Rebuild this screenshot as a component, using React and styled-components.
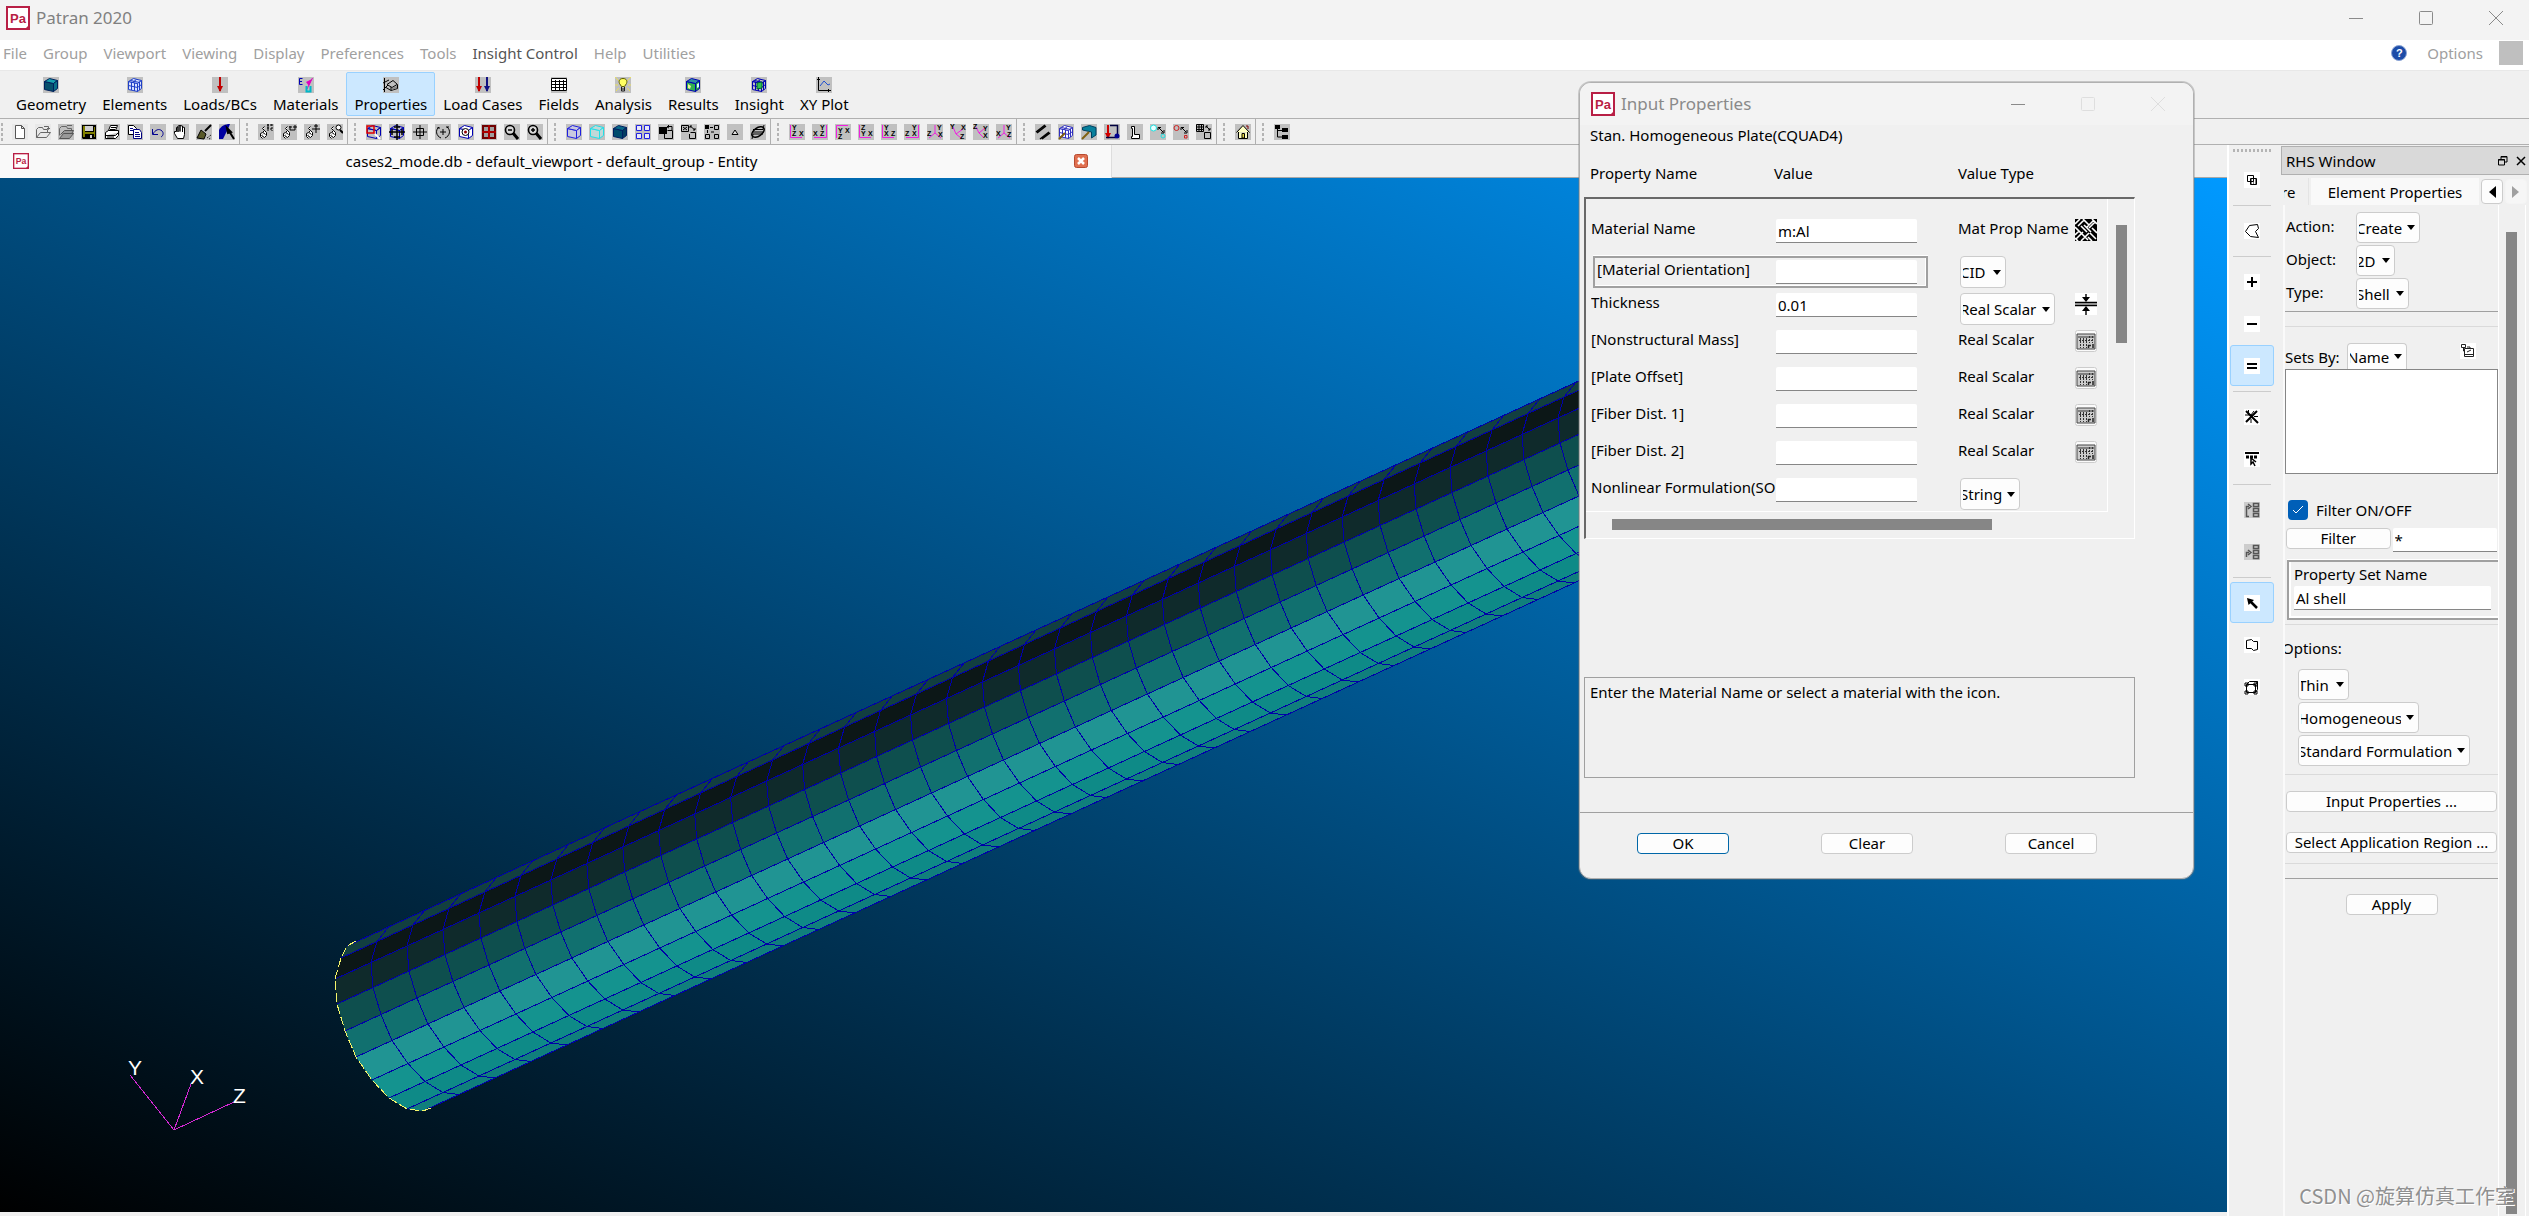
import { Fragment } from "react";
import styled, { createGlobalStyle, css } from "styled-components";

/* ---------- icons ---------- */

const BLUE = "#0000b4";
const GREY = "#c0c0c0";

const Cube = ({ fill = "none", top = fill, side = fill, stroke = BLUE, grid }) => (
  <g stroke={stroke} strokeWidth="1" strokeLinejoin="round">
    <path d="M1.5 4.5 10.5 6.5V14.5L1.5 12.5Z" fill={fill} />
    <path d="M1.5 4.5 6.5 1.5 14.5 3.5 10.5 6.5Z" fill={top} />
    <path d="M10.5 6.5 14.5 3.5V11.5L10.5 14.5Z" fill={side} />
    {grid && (
      <path d="M4.5 5V13M7.5 6V14M1.5 8.5 10.5 10.5 14.5 7.5M3.5 3.5 12.5 5.5M9.5 2.5 5.5 5.5M12.5 5V13" fill="none" />
    )}
  </g>
);

const Letter = ({ x, y, children }) => (
  <text x={x} y={y} fontSize="7" fontWeight="700" fontFamily='"Liberation Sans", sans-serif'>
    {children}
  </text>
);

// lines first, then [letter, x, y] for each axis
const axisIcon = (d, ...letters) => (
  <>
    <path d={d} stroke="#f020e0" fill="none" />
    {letters.map(([t, x, y]) => (
      <Letter key={t} x={x} y={y}>
        {t}
      </Letter>
    ))}
  </>
);

const hand = (
  <path
    d="M4.5 14.5 2.5 12.5V9.5L4.5 8.5 6.5 6.5 4.5 4.5 6.5 2.5M3.5 11.5 6.5 13.5 8.5 11.5 8.5 8.5 6.5 6.5M5 8.5 7.5 10.5"
    stroke="#000"
    fill="#fff"
  />
);

const arrowDown = (x, color) => (
  <>
    <path d={`M${x} 0V14`} stroke={color} strokeWidth="2" />
    <path d={`M${x - 3} 9H${x + 3}L${x} 15Z`} fill={color} />
  </>
);

const icons = {
  geometry: <Cube fill="#07506c" top="#18a0ae" side="#0a7088" stroke="#00205c" />,
  elements: <Cube fill="#d8e0ff" stroke="#2040c8" grid />,
  loads: arrowDown(8, "#c00000"),
  materials: (
    <>
      <path d="M4.5 1.5H1.5V7.5H4.5M1.5 4.5H4" stroke={BLUE} fill="none" />
      <path d="M8 5 14 2 11 9Z" fill="#e000c0" />
      <path d="M14.5 1 9 12" stroke="#e000c0" />
      <path d="M8.5 9V14.5H12.5V9" stroke="#00b8c8" fill="none" strokeWidth="2" />
    </>
  ),
  properties: (
    <>
      <path d="M1.5 1V15M0 6 6 3M0 13 5 8M3 10.5 8 13.5 14.5 11.5V7.5L10 3.5 4 7.5 9 10.5 14 7.5M8 13V10" stroke="#000" fill="none" />
      <path d="M9 11 14 9V11L9 13Z" fill="#888" />
    </>
  ),
  loadCases: (
    <>
      {arrowDown(4, "#c00000")}
      {arrowDown(12, "#101080")}
    </>
  ),
  fields: (
    <>
      <rect x="0" y="1" width="16" height="13" fill="#fff" />
      <path d="M.5 1.5H15.5V13.5H.5ZM.5 4.5H15.5M.5 7.5H15.5M.5 10.5H15.5M4.5 3V13M8.5 3V13M12.5 3V13" stroke="#000" fill="none" />
    </>
  ),
  analysis: (
    <>
      <path d="M0 0 4 4M16 0 12 4M0 8H3M13 8H16M1 14 4 11M15 14 12 11" stroke="#e8e060" />
      <path d="M8 1.5C4.5 1.5 3.5 4 4.5 6.5L6.5 9.5H9.5L11.5 6.5C12.5 4 11.5 1.5 8 1.5Z" fill="#ffff60" stroke="#606000" />
      <path d="M6.5 10V14H9.5V10M6.5 12H9.5" stroke="#222" fill="none" />
    </>
  ),
  results: (
    <>
      <Cube fill="#30b050" top="#3090a0" side="#20a040" />
      <path d="M3 7 6 9 5 12 3 11Z" fill="#f0f0a0" />
      <path d="M12 7 14 6V10L12 11Z" fill="#d0ffff" />
    </>
  ),
  insight: (
    <>
      <Cube grid />
      <path d="M6 6 11 5V11L6 12Z" fill="#30c050" stroke="#006030" />
    </>
  ),
  xyPlot: (
    <>
      <path d="M2.5 0V13.5H15M1 2.5H4M12.5 12V15" stroke="#000" fill="none" />
      <path d="M4 9 8 4 12 8 14 7" stroke="#2050d0" fill="none" />
    </>
  ),

  newFile: <path d="M3.5 1.5H9.5L12.5 4.5V14.5H3.5ZM9.5 1.5V4.5H12.5" stroke="#555" fill="#fff" />,
  open: <path d="M1.5 13.5V5.5L3.5 3.5H7.5L8.5 5.5H12.5V8M1.5 13.5 5.5 8.5H15.5L11.5 13.5ZM9 2.5H13.5V5M12 4 13.5 5.5 15 4" stroke="#666" fill="none" />,
  reopen: (
    <>
      <path d="M1.5 11.5V4.5L3.5 2.5H8.5L9.5 4.5H13.5V7M9 1.5H14" stroke="#666" fill="none" />
      <path d="M1.5 14.5 5.5 9.5H15.5L11.5 14.5ZM2.5 10.5 6.5 6.5H15.5L14 9" stroke="#555" fill="#999" />
    </>
  ),
  save: (
    <>
      <path d="M1 1H15V15H2L1 14Z" fill="#000" />
      <path d="M2 2H4V13H2ZM13 3H14V13H13ZM4 8H13V10H4Z" fill="#808000" />
      <path d="M4 2H12V7H4ZM9 11H11V14H9Z" fill="#d0d0d0" />
    </>
  ),
  print: (
    <>
      <path d="M4.5 6.5 6.5 1.5H13.5L11.5 6.5M1.5 8.5 4.5 6.5H14.5V11.5L11.5 14.5H1.5ZM1.5 11.5H11.5L14.5 8.5" stroke="#000" fill="#fff" />
      <path d="M7 3.5H12M6 5.5H11M3 13H10" stroke="#000" />
    </>
  ),
  copy: (
    <>
      <path d="M1.5 1.5H6.5L9.5 4.5V10.5H1.5Z" stroke="#000" fill="#fff" />
      <path d="M6.5 5.5H12.5L14.5 8.5V14.5H6.5Z" stroke="#000080" fill="#fff" />
      <path d="M3 4.5H6M3 6.5H6M8 8.5H12M8 10.5H13M8 12.5H13" stroke="#000080" />
    </>
  ),
  undo: <path d="M2.5 5V10.5H8M3 10C5 6 9 4 12 7 14 9 13 12 11 13" stroke="#000090" fill="none" />,
  stop: <path d="M4.5 14.5 1.5 9.5V7.5H3.5V3.5L5 3V8V2L7 1.5V7.5V1.5L9.5 2V8V3L11.5 3.5V10.5L10.5 14.5Z" stroke="#000" fill="#fff" />,
  refresh: (
    <>
      <path d="M15 1 9 7" stroke="#000" strokeWidth="2" />
      <path d="M5 6 10 10 8 15 1 14Z" fill="#585828" stroke="#000" />
      <path d="M11 14 15 11M13 15 15 14" stroke="#000" strokeDasharray="1 1" />
    </>
  ),
  cleanup: (
    <>
      <path d="M0 6C2 2 6 0 11 0L9 5 4 15H0Z" fill="#0000a0" />
      <path d="M8 4 12 8 9 9ZM10 7 15 15" stroke="#000" strokeWidth="2" fill="#d8b060" />
    </>
  ),

  handZoom: <>{hand}<path d="M9 1H15M9 5H15M10 0V7M14 0V7M9 3H12" stroke="#000" strokeDasharray="2 1" /></>,
  handRotate: <>{hand}<path d="M9 2V6H14V1M8 3H11M12 3H16" stroke="#000" fill="none" /></>,
  handPan: <>{hand}<path d="M12 0V9M8 5H16M10 2H14" stroke="#000" fill="none" /></>,
  handScale: <>{hand}<circle cx="11.5" cy="3.5" r="2.5" stroke="#000" fill="#fff" /><path d="M13 6 16 9" stroke="#000" strokeWidth="2" /></>,

  fitView: <><Cube /><path d="M1 2H8V9H1Z" stroke="#e00000" strokeWidth="1.5" fill="none" /><path d="M9 10 14 15" stroke="#fff" strokeWidth="2" /></>,
  center: <><Cube /><path d="M8 0V16M0 8H16M5 3H11M3 5V11M13 5V11M5 13H11" stroke="#000" strokeWidth="1.5" /></>,
  target: <path d="M8 1V15M1 8H15M4.5 4.5H11.5V11.5H4.5Z" stroke="#000" fill="none" />,
  spin: <path d="M4 3C0 6 1 12 6 14M12 3C16 6 15 12 10 14M5 8H11M8 5V11M11 3H14M2 4H5" stroke="#000" fill="none" />,
  cubeFocus: <><Cube fill="#fff" /><circle cx="7.5" cy="8" r="3.5" stroke="#000" fill="#fff" /><circle cx="7.5" cy="8" r="1.5" fill="#900000" /></>,
  redGrid: <><rect x="1" y="1" width="14" height="14" fill="#700000" /><path d="M3 3H7V7H3ZM9 3H13V7H9ZM3 9H7V13H3ZM9 9H13V13H9Z" fill="#a0a0a0" /><path d="M1 8H15M8 1V15" stroke="#e00000" /></>,
  zoomOut: <><circle cx="6" cy="6" r="4.5" stroke="#000" strokeWidth="1.6" fill="#d8d8d8" /><path d="M4 6H8" stroke="#000" strokeWidth="1.5" /><path d="M9 9 14 15" stroke="#000" strokeWidth="3" /></>,
  zoomIn: <><circle cx="6" cy="6" r="4.5" stroke="#000" strokeWidth="1.6" fill="#d8d8d8" /><path d="M4 6H8M6 4V8" stroke="#000" strokeWidth="1.5" /><path d="M9 9 14 15" stroke="#000" strokeWidth="3" /></>,

  wire: <Cube fill="#c8c8e0" stroke="#2020e0" />,
  hidden: <Cube fill="#c0d8d8" stroke="#20e0e8" />,
  shaded: <Cube fill="#004c6c" top="#086888" side="#043c60" stroke="#002060" />,
  tiles: <path d="M1.5 1.5H6.5V6.5H1.5ZM9.5 1.5H14.5V6.5H9.5ZM1.5 9.5H6.5V14.5H1.5ZM9.5 9.5H14.5V14.5H9.5Z" stroke="#2020e0" fill="#e8e8f8" />,
  plotErase: <><rect x="1" y="3" width="8" height="7" /><path d="M9.5 6.5H14.5V14.5H6.5V10M10 2.5H14V6M11 1 9 3 11 4" stroke="#000" fill="none" /></>,
  labelShow: <path d="M.5 1.5H7.5V7.5H.5ZM2 3 6 6M6 3 2 6M9.5 8.5H14.5V14.5H8.5V10M9 2 14 6M11 2H9V4M14 4V6H12" stroke="#000" fill="none" />,
  labelHide: <><rect x="1" y="1" width="4" height="4" /><path d="M6 3.5H9M10.5 1.5H14.5V5.5H10.5ZM3.5 6V9M1.5 10.5H5.5V14.5H1.5ZM10.5 10.5H14.5V14.5H10.5ZM7 8H10" stroke="#000" fill="none" /></>,
  node: <path d="M8 6 11 10.5H5Z" stroke="#000" fill="#e0e0e0" />,
  cycle: <><ellipse cx="8" cy="8" rx="7" ry="4" transform="rotate(-35 8 8)" stroke="#000" strokeWidth="1.5" fill="none" /><path d="M3 5.5H13L14 1M13 10H3L2 15M2 8H14" stroke="#000" fill="none" /></>,

  v1: axisIcon("M1.5 1V13.5H13", ["Y", 3, 6], ["Z", 3, 12], ["X", 10, 12]),
  v2: axisIcon("M14.5 1V13.5H2", ["X", 1, 12], ["Y", 8, 6], ["Z", 8, 12]),
  v3: axisIcon("M1.5 14V1.5H13", ["Y", 3, 9], ["X", 10, 9], ["Z", 3, 15]),
  v4: axisIcon("M1.5 1V13.5H13", ["Z", 3, 6], ["Y", 3, 12], ["X", 10, 12]),
  v5: axisIcon("M1.5 1V13.5H13", ["Y", 3, 6], ["X", 3, 12], ["Z", 10, 12]),
  v6: axisIcon("M14.5 1V13.5H2", ["Z", 1, 12], ["Y", 8, 6], ["X", 8, 12]),
  v7: axisIcon("M8 1V9L2 14M8 9 14 14", ["Y", 10, 6], ["Z", 0, 12], ["X", 11, 13]),
  v8: axisIcon("M3 3 6 10 13 5M6 10 11 14", ["Y", 0, 5], ["X", 11, 6], ["Z", 10, 15]),
  v9: axisIcon("M3 3 6 9 12 4M6 9 10 13", ["Z", 0, 5], ["Y", 10, 7], ["X", 10, 14]),
  v10: axisIcon("M8 1V9L2 14M8 9 14 14", ["Y", 10, 6], ["X", 0, 12], ["Z", 11, 13]),

  pencils: <path d="M1 8 10 1M2 9 11 2M5 15 14 8M7 15 15 9" stroke="#000" strokeWidth="1.5" />,
  hexWire: <><Cube fill="#fff" stroke="#3030c0" grid /><path d="M1 15 7 9" stroke="#806010" strokeWidth="2" /></>,
  hexFill: <><path d="M1.5 3.5 8.5 1.5 15 3.5V11L10.5 14V8L1.5 6Z" fill="#08809c" stroke="#004060" /><path d="M1 15 8 8" stroke="#806010" strokeWidth="2" /></>,
  swap: <><path d="M4 1V10" stroke="#d00000" strokeWidth="2" /><path d="M1 9H7L4 15Z" fill="#d00000" /><path d="M6 1.5H13.5V14M2 13.5H12" stroke="#000040" fill="none" strokeWidth="1.5" /><circle cx="13" cy="12" r="2.5" fill="#000090" /></>,
  boot: <path d="M4.5 2.5H7.5V10.5H12.5V14.5H4.5V12.5H5.5V4.5H4.5Z" stroke="#000" fill="#fff" />,
  cyanNode: <><circle cx="3.5" cy="4" r="3" stroke="#20e0e0" fill="#e8ffff" /><circle cx="13" cy="12" r="2" stroke="#20e0e0" fill="none" /><path d="M9 4 13 8M8 6V3.5H11M14 6V9H11" stroke="#000" fill="none" /></>,
  redNode: <><circle cx="3.5" cy="4" r="2.5" stroke="#d02020" fill="none" /><path d="M11.5 11.5H14V14H11.5Z" stroke="#d02020" fill="none" /><path d="M9 4 13 8M8 6V3.5H11M14 6V9H11" stroke="#000" fill="none" /></>,
  gridNode: <path d="M.5 .5H7.5V7.5H.5ZM3 0V8M5.5 0V8M0 3H8M0 5.5H8M8.5 8.5H14.5V14.5H8.5ZM10 2 14 6M10 4V2H12M14 4V6H12" stroke="#000" fill="none" />,
  home: <><path d="M1.5 8.5 8 1.5 14.5 8.5M3.5 8V14.5H12.5V8" stroke="#000" fill="#ffffc0" /><path d="M11 2H13V5" stroke="#800000" fill="none" /><path d="M7 9.5H9.5V14H7Z" fill="#e8d840" stroke="#000" /></>,
  tree: <><path d="M1 1H6V5H1ZM8 4H14V8H8ZM8 11H14V15H8Z" /><path d="M3.5 5V13H8M3.5 6.5H8" stroke="#000" fill="none" /></>,

  pickOverlap: <><path d="M3.5 3.5H9.5V9.5H3.5ZM6.5 6.5H12.5V12.5H6.5Z" stroke="#000" fill="none" /><path d="M7 8H12M7 10H12M7 12H12" stroke="#000" strokeDasharray="1 1" /></>,
  pickPolygon: <path d="M5.5 2.5 13.5 1.5 14.5 5.5 11.5 8.5 14.5 14.5 6.5 13.5 1.5 8.5Z" stroke="#000" fill="none" />,
  plus: <path d="M8 3V13M3 8H13" stroke="#000" strokeWidth="2" />,
  minus: <path d="M3 8H13" stroke="#000" strokeWidth="2" />,
  equal: <path d="M3 6H13M3 10H13" stroke="#000" strokeWidth="2" />,
  cross: <><path d="M2 2 14 14M13 2 2 13" stroke="#000" strokeWidth="2" /><path d="M1 6H7M4.5 1V6M10 7.5H14M7 10V14M10 2 7 6" stroke="#000" /></>,
  pickRow: <><path d="M1 2H15" stroke="#000" strokeWidth="2" /><path d="M2 6H14" stroke="#000" strokeWidth="3" strokeDasharray="3 1" /><path d="M7 7V13L9 11 11 15M7 7 12 11" stroke="#000" strokeWidth="1.5" fill="none" /></>,
  stackUp: <path d="M5 14.5H2.5V4.5H5M4 2 7 4.5 4 7M9.5 1.5H14.5V4.5H9.5ZM9.5 6.5H14.5V9.5H9.5ZM9.5 11.5H14.5V14.5H9.5Z" stroke="#555" fill="none" strokeWidth="1.5" />,
  stackDown: <path d="M2.5 13V8.5H5M4 6 7 8.5 4 11M9.5 1.5H14.5V4.5H9.5ZM9.5 6.5H14.5V9.5H9.5ZM9.5 11.5H14.5V14.5H9.5Z" stroke="#555" fill="none" strokeWidth="1.5" />,
  arrow: <><path d="M3 3 4.500 10 10 5Z" /><path d="M5 5 13 13" stroke="#000" strokeWidth="2.5" /></>,
  face: <path d="M2.5 3.5 7.5 2.5 9.5 4.5H13.5V12.5L9.5 13.5 7.5 11.5H2.5Z" stroke="#000" fill="none" />,
  solid: <path d="M2.5 5.5H11.5V13.5H2.5ZM2.5 5.5 5.5 2.5H13.5V10.5L11.5 13.5M11.5 5.5 13.5 2.5M1 4H4V7H1ZM10 4H13V7H10ZM1 12H4V15H1ZM10 12H13V15H10Z" stroke="#000" fill="none" />,
  sets: <path d="M1.5 1.5H5.5V4.5H1.5ZM4.5 5.5H13.5V13.5H4.5ZM4.5 11.5H13.5M7 9 11 7M7 4H10V6M3.5 4.5V8H5" stroke="#222" fill="none" />,
};

const Icon = ({ name, bg = GREY, size = 16 }) => (
  <svg width={size} height={size} viewBox="0 0 16 16" aria-hidden="true">
    <rect width="16" height="16" fill={bg} />
    {icons[name]}
  </svg>
);

const Logo = ({ size = 24 }) => (
  <svg width={size} height={size} viewBox="0 0 24 24" aria-hidden="true">
    <rect x="1" y="1" width="22" height="22" fill="#fff" stroke="#b81f45" strokeWidth="2" />
    <path d="M19 23H23V19Z" fill="#b81f45" />
    <text x="4" y="17" fontSize="13" fontWeight="700" fill="#b81f45" fontFamily='"Liberation Sans", sans-serif'>
      Pa
    </text>
  </svg>
);

const winPaths = {
  Minimize: "M1 8.5H15",
  Maximize: "M2.5 1.5H13.5Q14.5 1.5 14.5 2.5V13.5Q14.5 14.5 13.5 14.5H2.5Q1.5 14.5 1.5 13.5V2.5Q1.5 1.5 2.5 1.5Z",
  Close: "M1 1 15 15M15 1 1 15",
};

const WindowControls = ({ dim }) =>
  Object.keys(winPaths).map((k) => (
    <WinButton key={k} aria-label={k}>
      <svg width="16" height="16" viewBox="0 0 16 16">
        <path d={winPaths[k]} stroke={dim && k !== "Minimize" ? "#dedede" : "#8a8a8a"} fill="none" />
      </svg>
    </WinButton>
  ));

/* ---------- data ---------- */

const menus = ["File", "Group", "Viewport", "Viewing", "Display", "Preferences", "Tools", "Insight Control", "Help", "Utilities"];

const apps = [
  ["Geometry", "geometry"],
  ["Elements", "elements"],
  ["Loads/BCs", "loads"],
  ["Materials", "materials"],
  ["Properties", "properties"],
  ["Load Cases", "loadCases"],
  ["Fields", "fields"],
  ["Analysis", "analysis"],
  ["Results", "results"],
  ["Insight", "insight"],
  ["XY Plot", "xyPlot"],
];

const toolGroups = [
  ["newFile", "open", "reopen", "save", "print", "copy", "undo", "stop", "refresh", "cleanup"],
  ["handZoom", "handRotate", "handPan", "handScale"],
  ["fitView", "center", "target", "spin", "cubeFocus", "redGrid", "zoomOut", "zoomIn"],
  ["wire", "hidden", "shaded", "tiles", "plotErase", "labelShow", "labelHide", "node", "cycle"],
  ["v1", "v2", "v3", "v4", "v5", "v6", "v7", "v8", "v9", "v10"],
  ["pencils", "hexWire", "hexFill", "swap", "boot", "cyanNode", "redNode", "gridNode"],
  ["home"],
  ["tree"],
];

const pickGroups = [
  ["pickOverlap"],
  ["pickPolygon"],
  ["plus", "minus", "equal"],
  ["cross", "pickRow"],
  ["stackUp", "stackDown"],
  ["arrow", "face", "solid"],
];

const properties = [
  { name: "Material Name", value: "m:Al", type: "Mat Prop Name", icon: "weave" },
  { name: "[Material Orientation]", value: "", select: "CID", width: 46, active: true },
  { name: "Thickness", value: "0.01", select: "Real Scalar", width: 95, icon: "thick" },
  { name: "[Nonstructural Mass]", value: "", type: "Real Scalar", icon: "field" },
  { name: "[Plate Offset]", value: "", type: "Real Scalar", icon: "field" },
  { name: "[Fiber Dist. 1]", value: "", type: "Real Scalar", icon: "field" },
  { name: "[Fiber Dist. 2]", value: "", type: "Real Scalar", icon: "field" },
  { name: "Nonlinear Formulation(SO", value: "", select: "String", width: 60 },
];

const propIcons = {
  weave: (
    <>
      <rect width="22" height="22" fill="#000" />
      <path
        d="M0 5 5 0M3 7 9 1M8 0 14 6M12 8 19 1M17 0 22 5M0 8 7 15M6 7 12 13M9 6 16 13M14 9 20 3M17 9 22 14M0 16 4 12M1 20 8 13M6 22 14 14M7 15 13 21M15 14 21 20M13 18 17 22M0 19 3 22"
        stroke="#fff"
        strokeWidth="1.6"
      />
    </>
  ),
  thick: (
    <>
      <rect width="22" height="22" fill="#fff" />
      <path d="M0 9H22V13H0Z" fill={GREY} />
      <path d="M0 9.5H22M0 12.5H22M11 1V6M11 16V22" stroke="#000" strokeWidth="1.4" />
      <path d="M7 4H15L11 9ZM7 18H15L11 13Z" />
    </>
  ),
  field: (
    <>
      <rect x=".5" y=".5" width="21" height="21" rx="2" fill="#fafafa" stroke="#ccc" />
      <path d="M2 4H20V19H2Z" fill="#ccc" stroke="#444" />
      <path d="M3 7H19" stroke="#333" />
      <path d="M5.5 8V18M8.5 8V18M11.5 8V18M14.500 6V13M17.500 6V13M4 10.500H18" stroke="#333" strokeDasharray="2 1" />
      <path d="M13 15.500H16M13.500 15V18M18 14V18" stroke="#222" strokeWidth="1.500" />
    </>
  ),
};

/* ---------- mesh ---------- */

const ring = [
  [347, 768],
  [341, 780],
  [335, 801],
  [337, 826],
  [345, 853],
  [356, 879],
  [372, 902],
  [389, 920],
  [407, 931],
  [423, 933],
];
const bands = ["#123f40", "#0c1717", "#0f2a2b", "#0e4f4e", "#11706f", "#209493", "#14938f", "#0e8a87", "#107f7c"];
const STEP = [35.97, -16.5];
const RINGS = 38;

const at = ([x, y], n) => `${x + STEP[0] * n},${y + STEP[1] * n}`;

const Mesh = () => (
  <Scene role="img" aria-label="Shell mesh">
    {bands.map((color, i) => (
      <polygon
        key={color}
        fill={color}
        points={[at(ring[i], 0), at(ring[i], RINGS), at(ring[i + 1], RINGS), at(ring[i + 1], 0)].join(" ")}
      />
    ))}
    <g stroke="#0000a8" fill="none" shapeRendering="crispEdges">
      {ring.map((p, i) => (
        <polyline key={i} points={`${at(p, 0)} ${at(p, RINGS)}`} />
      ))}
      {Array.from({ length: RINGS }, (_, n) => (
        <polyline key={n} points={ring.map((p, i) => at(i ? p : [353, 765], n + 1)).join(" ")} />
      ))}
    </g>
    <polyline
      points={`356,763 ${ring.map((p) => p.join()).join(" ")} 433,929`}
      stroke="#f4f46a"
      strokeDasharray="9 3"
      fill="none"
      shapeRendering="crispEdges"
    />
    <path d="M130 897 174 952 191 906M174 952 234 924" stroke="#d428d4" fill="none" shapeRendering="crispEdges" />
    <g fill="#fff" fontSize="21" fontFamily='"Liberation Sans", sans-serif'>
      <text x="128" y="897">Y</text>
      <text x="190" y="906">X</text>
      <text x="233" y="925">Z</text>
    </g>
  </Scene>
);

/* ---------- shared controls ---------- */

const Combo = ({ value, width, height = 32, label, id, cut }) => (
  <ComboBox $width={width} $height={height} $cut={cut}>
    <select id={id} aria-label={label} defaultValue={value}>
      <option>{value}</option>
    </select>
    <svg width="8" height="5" viewBox="0 0 8 5" aria-hidden="true">
      <path d="M0 0H8L4 5Z" />
    </svg>
  </ComboBox>
);

const InputProperties = () => (
  <Dialog role="dialog" aria-label="Input Properties">
    <DialogTitle>
      <Logo />
      <span>Input Properties</span>
      <WindowControls dim />
    </DialogTitle>
    <DialogText>Stan. Homogeneous Plate(CQUAD4)</DialogText>
    <Heads>
      <span>Property Name</span>
      <span>Value</span>
      <span>Value Type</span>
    </Heads>
    <ScrollArea>
      <Pane>
        {properties.map((p, i) => (
          <PropRow key={p.name}>
            <PropField $active={p.active}>
              <label htmlFor={`prop${i}`}>{p.name}</label>
              <LineInput id={`prop${i}`} defaultValue={p.value} />
            </PropField>
            {p.select ? (
              <Combo value={p.select} width={p.width} label={`${p.name} type`} />
            ) : (
              <span>{p.type}</span>
            )}
            {p.icon && (
              <IconButton aria-label={`Pick ${p.name}`}>
                <svg width="22" height="22" viewBox="0 0 22 22">
                  {propIcons[p.icon]}
                </svg>
              </IconButton>
            )}
          </PropRow>
        ))}
      </Pane>
      <VBar />
      <HBar />
    </ScrollArea>
    <Hint>Enter the Material Name or select a material with the icon.</Hint>
    <DialogFooter>
      <PushButton $primary>OK</PushButton>
      <PushButton>Clear</PushButton>
      <PushButton>Cancel</PushButton>
    </DialogFooter>
  </Dialog>
);

const RhsWindow = () => (
  <Rhs>
    <RhsTitle>
      <span>RHS Window</span>
      <IconButton aria-label="Float">
        <svg width="10" height="10" viewBox="0 0 10 10">
          <path d="M3 3V.5H9V6H7M.5 3.5H6.5V9H.5ZM0 4H7M3 1H9" stroke="#000" fill="none" />
        </svg>
      </IconButton>
      <IconButton aria-label="Close panel">
        <svg width="10" height="10" viewBox="0 0 10 10">
          <path d="M1 1 9 9M9 1 1 9" stroke="#000" strokeWidth="1.5" />
        </svg>
      </IconButton>
    </RhsTitle>
    <Tabs>
      <PrevTab>re</PrevTab>
      <Tab>Element Properties</Tab>
      <TabArrow aria-label="Previous tab">
        <svg width="8" height="12" viewBox="0 0 8 12">
          <path d="M8 0V12L1 6Z" />
        </svg>
      </TabArrow>
      <TabArrow aria-label="Next tab" disabled>
        <svg width="8" height="12" viewBox="0 0 8 12">
          <path d="M0 0V12L7 6Z" fill="#a0a0a0" />
        </svg>
      </TabArrow>
    </Tabs>
    <RhsBody>
      <Form>
        <Choices>
          <label htmlFor="action">Action:</label>
          <Combo id="action" value="Create" width={64} height={31} />
          <label htmlFor="object">Object:</label>
          <Combo id="object" value="2D" width={39} height={31} />
          <label htmlFor="type">Type:</label>
          <Combo id="type" value="Shell" width={53} height={31} />
        </Choices>
        <Rule $dark $top={2} />
        <Rule $top={14} />
        <SetsRow>
          <label htmlFor="setsBy">Sets By:</label>
          <Combo id="setsBy" value="Name" width={60} height={26} cut />
          <IconButton aria-label="Select sets">
            <Icon name="sets" bg="#fff" />
          </IconButton>
        </SetsRow>
        <SetList />
        <CheckRow>
          <Check>
            <input type="checkbox" id="filterOn" defaultChecked />
            <svg width="12" height="10" viewBox="0 0 12 10" aria-hidden="true">
              <path d="M1 5 4 8 11 1" stroke="#fff" fill="none" />
            </svg>
          </Check>
          <label htmlFor="filterOn">Filter ON/OFF</label>
        </CheckRow>
        <FilterRow>
          <PushButton>Filter</PushButton>
          <LineInput aria-label="Filter pattern" defaultValue="*" />
        </FilterRow>
        <SetName>
          <label htmlFor="setName">Property Set Name</label>
          <LineInput id="setName" defaultValue="Al shell" />
        </SetName>
        <Rule $top={4} />
        <OptionsTitle>Options:</OptionsTitle>
        <Options>
          <Combo label="Thickness option" value="Thin" width={51} height={31} />
          <Combo label="Section option" value="Homogeneous" width={121} height={31} />
          <Combo label="Formulation option" value="Standard Formulation" width={172} height={31} />
        </Options>
        <Rule $top={8} />
        <FormActions>
          <PushButton>Input Properties ...</PushButton>
          <PushButton>Select Application Region ...</PushButton>
        </FormActions>
        <Rule $top={10} />
        <Rule $dark $top={14} />
        <ApplyRow>
          <PushButton>Apply</PushButton>
        </ApplyRow>
      </Form>
      <SideScroll />
    </RhsBody>
  </Rhs>
);

const App = () => (
  <Page>
    <GlobalStyle />
    <TitleBar>
      <Logo />
      <span>Patran 2020</span>
      <WindowControls />
    </TitleBar>
    <MenuBar>
      {menus.map((m) => (
        <MenuItem key={m} $enabled={m === "Insight Control"}>
          {m}
        </MenuItem>
      ))}
      <Spacer />
      <svg width="16" height="16" viewBox="0 0 16 16" aria-hidden="true">
        <circle cx="8" cy="8" r="7.5" fill="#1c4ca8" stroke="#8aa4d4" />
        <text x="5" y="12" fontSize="11" fontWeight="700" fill="#fff" fontFamily='"Liberation Sans", sans-serif'>
          ?
        </text>
      </svg>
      <OptionsItem>Options</OptionsItem>
      <Swatch />
    </MenuBar>
    <AppBar>
      {apps.map(([label, icon]) => (
        <AppButton key={label} $active={label === "Properties"}>
          <Icon name={icon} />
          {label}
        </AppButton>
      ))}
    </AppBar>
    <ToolBar>
      {toolGroups.map((group) => (
        <ToolGroup key={group[0]}>
          {group.map((name) => (
            <ToolButton key={name} aria-label={name}>
              <Icon name={name} bg={/^(newFile|open)$/.test(name) ? "#e8e8e8" : GREY} />
            </ToolButton>
          ))}
        </ToolGroup>
      ))}
    </ToolBar>
    <Main>
      <Workspace>
        <TabStrip>
          <DocTab>
            <Logo size={16} />
            <span>cases2_mode.db - default_viewport - default_group - Entity</span>
            <IconButton aria-label="Close document">
              <svg width="14" height="14" viewBox="0 0 14 14">
                <rect x=".5" y=".5" width="13" height="13" rx="2" fill="#e07050" stroke="#b84a30" />
                <path d="M4 4 10 10M10 4 4 10" stroke="#fff" strokeWidth="2.5" />
              </svg>
            </IconButton>
          </DocTab>
        </TabStrip>
        <Mesh />
      </Workspace>
      <PickBar>
        {pickGroups.map((group, i) => (
          <Fragment key={group[0]}>
            {i > 0 && <PickRule />}
            <PickGroup>
              {group.map((name) => (
                <PickButton key={name} aria-label={name} $active={name === "equal" || name === "arrow"}>
                  <Icon name={name} bg={name.startsWith("stack") ? "#ccc" : "#fff"} />
                </PickButton>
              ))}
            </PickGroup>
          </Fragment>
        ))}
      </PickBar>
      <RhsWindow />
    </Main>
    <InputProperties />
    <Watermark>CSDN @旋算仿真工作室</Watermark>
  </Page>
);

// Styles
const GlobalStyle = createGlobalStyle`
  * {
    box-sizing: border-box;
  }

  body {
    margin: 0;
    overflow: hidden;
  }

  body, button, input, select {
    font-family: "Noto Sans", "Open Sans", sans-serif;
    font-size: 15px;
    line-height: 20px;
    color: #000;
  }

  button {
    border: 0;
    padding: 0;
    background: none;
  }

  svg {
    display: block;
    flex: none;
  }
`;

const Page = styled.div`
  position: relative;
  display: flex;
  flex-direction: column;
  height: 100vh;
  background: #f0f0f0;
`;

const TitleBar = styled.header`
  display: flex;
  align-items: center;
  height: 40px;
  padding: 0 0 5px 6px;
  background: #f3f3f3;
  color: #808080;

  span {
    flex: 1;
    margin-left: 6px;
    font-size: 17px;
  }
`;

const WinButton = styled.button`
  display: flex;
  justify-content: center;
  width: 66px;
  margin-left: 4px;
`;

const MenuBar = styled.nav`
  display: flex;
  align-items: center;
  gap: 16px;
  height: 31px;
  padding: 0 6px 4px 3px;
  background: #fff;
  border-bottom: 1px solid #e8e8e8;
`;

const MenuItem = styled.button`
  color: ${(p) => (p.$enabled ? "#555" : "#a0a0a0")};
`;

const Spacer = styled.div`
  flex: 1;
`;

const OptionsItem = styled.button`
  padding-left: 4px;
  color: #a0a0a0;
`;

const Swatch = styled.div`
  width: 24px;
  height: 24px;
  background: #bfbfbf;
`;

const dots = css`
  background-image: radial-gradient(#b4b4b4 1px, transparent 1px);
  background-size: 4px 5px;
`;

const AppBar = styled.div`
  display: flex;
  align-items: flex-start;
  height: 48px;
  padding: 1px 0 0 8px;
  border-bottom: 1px solid #b0b0b0;
`;

const AppButton = styled.button`
  display: flex;
  flex-direction: column;
  align-items: center;
  gap: 1px;
  height: 44px;
  padding: 4px 7px 0;
  border: 1px solid ${(p) => (p.$active ? "#99d1ff" : "transparent")};
  border-radius: 2px;
  background: ${(p) => (p.$active ? "#cce8ff" : "none")};
`;

const ToolBar = styled.div`
  display: flex;
  height: 26px;
  border-bottom: 1px solid #b0b0b0;
`;

const ToolGroup = styled.div`
  display: flex;
  align-items: center;
  padding: 0 1px 0 5px;
  border-right: 1px solid #b0b0b0;

  &::before {
    content: "";
    width: 4px;
    height: 20px;
    margin-right: 5px;
    ${dots}
  }

  &:first-child {
    padding-left: 0;
  }

  &:first-child::before {
    margin-right: 4px;
  }

  &:last-child {
    border: 0;
  }
`;

const ToolButton = styled.button`
  display: flex;
  justify-content: center;
  width: 23px;
`;

const Main = styled.main`
  display: flex;
  flex: 1;
  min-height: 0;
`;

const Workspace = styled.section`
  display: flex;
  flex-direction: column;
  flex: 1;
  min-width: 0;
  padding-bottom: 4px;
  border-right: 2px solid #fff;
`;

const TabStrip = styled.div`
  height: 33px;
  border-bottom: 1px solid #a8a8a8;
`;

const DocTab = styled.div`
  display: flex;
  align-items: center;
  width: 50%;
  max-width: 1112px;
  height: 33px;
  padding: 0 23px 2px 13px;
  background: #f9f9f9;
  border-right: 1px solid #ddd;

  span {
    flex: 1;
    text-align: center;
  }
`;

const Scene = styled.svg`
  flex: 1;
  width: 100%;
  min-height: 0;
  background: linear-gradient(to top right, #000, #0099ff);
`;

const PickBar = styled.div`
  display: flex;
  flex-direction: column;
  align-items: center;
  width: 46px;
  margin-right: 6px;

  &::before {
    content: "";
    width: 40px;
    height: 5px;
    margin: 3px 0 2px;
    ${dots}
  }
`;

const PickGroup = styled.div`
  display: flex;
  flex-direction: column;
  gap: 1px;
  padding: 4px 0 5px;
`;

const PickRule = styled.div`
  width: 38px;
  height: 1px;
  background: #ccc;
`;

const PickButton = styled.button`
  display: flex;
  align-items: center;
  justify-content: center;
  width: 44px;
  height: 41px;
  border: 1px solid ${(p) => (p.$active ? "#99d1ff" : "transparent")};
  border-radius: 3px;
  background: ${(p) => (p.$active ? "#cce8ff" : "none")};
`;

const IconButton = styled.button`
  display: flex;
  flex: none;
`;

const PushButton = styled.button`
  width: 92px;
  height: 21px;
  line-height: 19px;
  border: 1px solid ${(p) => (p.$primary ? "#0067a8" : "#ccc")};
  border-radius: 4px;
  background: #fdfdfd;
  white-space: nowrap;
`;

const LineInput = styled.input`
  width: 141px;
  height: 24px;
  padding: 0 2px;
  border: 0;
  border-bottom: 1px solid #868686;
  border-radius: 2px 2px 0 0;
  background: #fff;
  outline: 0;
`;

const ComboBox = styled.span`
  display: inline-grid;
  align-items: center;
  width: ${(p) => p.$width}px;
  height: ${(p) => p.$height}px;
  padding: 0 4px 0 2px;
  border: 1px solid #ccc;
  border-radius: 4px;
  background: #fdfdfd;
  ${(p) =>
    p.$cut &&
    css`
      border-bottom: 0;
      border-radius: 4px 4px 0 0;
    `}

  select {
    grid-area: 1 / 1;
    width: calc(100% - 13px);
    padding: 0;
    border: 0;
    background: none;
    appearance: none;
    outline: 0;
    text-indent: -3px;
  }

  svg {
    grid-area: 1 / 1;
    justify-self: end;
    pointer-events: none;
  }
`;

const Rhs = styled.aside`
  display: flex;
  flex-direction: column;
  width: 248px;
`;

const RhsTitle = styled.div`
  display: flex;
  align-items: center;
  gap: 8px;
  height: 29px;
  margin-top: 1px;
  padding: 0 3px 0 4px;
  background: #d9d9d9;
  border: 1px solid #b0b0b0;
  border-right: 0;

  span {
    flex: 1;
  }
`;

const Tabs = styled.div`
  display: flex;
  align-items: center;
  gap: 2px;
  height: 30px;
  padding: 3px 2px 0 3px;
`;

const PrevTab = styled.button`
  align-self: stretch;
  width: 25px;
  border-right: 1px solid #e4e4e4;
  text-align: left;
  text-indent: -3px;
  overflow: hidden;
`;

const Tab = styled.button`
  flex: 1;
  align-self: stretch;
  background: #f9f9f9;
  white-space: nowrap;
`;

const TabArrow = styled.button`
  display: flex;
  align-items: center;
  justify-content: center;
  width: 22px;
  height: 25px;
  border: 1px solid ${(p) => (p.disabled ? "#f4f4f4" : "#ccc")};
  border-radius: 4px;
  background: ${(p) => (p.disabled ? "#f6f6f6" : "#fdfdfd")};
`;

const RhsBody = styled.div`
  display: flex;
  flex: 1;
  min-height: 0;
  margin: 0 3px 0 2px;
  border-right: 1px solid #fff;
`;

const Form = styled.form`
  flex: 1;
  min-width: 0;
  padding-top: 7px;
  border-left: 2px solid #fafafa;
  border-right: 1px solid #fff;
`;

const SideScroll = styled.div`
  width: 11px;
  margin: 27px 8px 2px 7px;
  background: #868686;
`;

const Choices = styled.div`
  display: grid;
  grid-template-columns: 70px 1fr;
  align-items: center;
  gap: 2px 0;
  padding-left: 1px;

  label {
    padding-bottom: 4px;
  }
`;

const Rule = styled.div`
  height: 1px;
  margin-top: ${(p) => p.$top}px;
  background: ${(p) => (p.$dark ? "#a0a0a0" : "#dadada")};
`;

const SetsRow = styled.div`
  display: flex;
  margin-top: 16px;
  padding-right: 22px;

  label {
    width: 62px;
    padding-top: 4px;
    white-space: nowrap;
  }

  button {
    height: 16px;
    margin-left: auto;
  }
`;

const SetList = styled.div`
  height: 105px;
  background: #fff;
  border: 1px solid #868686;
`;

const CheckRow = styled.div`
  display: flex;
  align-items: center;
  gap: 8px;
  margin-top: 26px;
  padding-left: 3px;
`;

const Check = styled.span`
  display: grid;
  place-items: center;

  input {
    grid-area: 1 / 1;
    width: 20px;
    height: 20px;
    margin: 0;
    appearance: none;
    border-radius: 4px;
    background: #005fb8;
  }

  svg {
    grid-area: 1 / 1;
    pointer-events: none;
  }
`;

const FilterRow = styled.div`
  display: grid;
  grid-template-columns: 1fr 1fr;
  gap: 2px;
  margin-top: 8px;
  padding: 0 1px;

  ${PushButton}, ${LineInput} {
    width: 100%;
  }
`;

const SetName = styled.fieldset`
  display: flex;
  flex-direction: column;
  gap: 2px;
  height: 60px;
  min-width: 0;
  margin: 8px 0 0 2px;
  padding: 2px 7px 0 5px;
  border: 2px solid #a0a0a0;
  border-right: 0;
  box-shadow: inset 2px -2px 0 #fff, 0 -1px 0 #fff;

  ${LineInput} {
    width: 100%;
  }
`;

const OptionsTitle = styled.div`
  margin-top: 13px;
  overflow: hidden;
  text-indent: -3px;
`;

const Options = styled.div`
  display: flex;
  flex-direction: column;
  gap: 2px;
  margin-top: 11px;
  padding-left: 13px;
`;

const FormActions = styled.div`
  display: flex;
  flex-direction: column;
  gap: 20px;
  margin-top: 16px;
  padding: 0 1px;

  ${PushButton} {
    width: 100%;
  }
`;

const ApplyRow = styled.div`
  display: flex;
  justify-content: center;
  margin-top: 15px;
`;

const Dialog = styled.div`
  position: absolute;
  top: 82px;
  right: 335px;
  width: 615px;
  height: 797px;
  background: #f0f0f0;
  border: 1px solid #b0b0b0;
  border-radius: 12px;
  box-shadow: 0 0 0 1px rgba(120, 120, 120, 0.35);
  overflow: hidden;
`;

const DialogTitle = styled.div`
  display: flex;
  align-items: center;
  height: 42px;
  padding: 0 2px 0 11px;
  background: #f3f3f3;
  color: #8a8a8a;

  span {
    flex: 1;
    margin-left: 6px;
    font-size: 17px;
  }
`;

const DialogText = styled.div`
  margin-left: 10px;
`;

const Heads = styled.div`
  display: grid;
  grid-template-columns: 184px 184px 1fr;
  margin: 18px 0 0 10px;
`;

const ScrollArea = styled.div`
  display: grid;
  grid-template-columns: 522px 1fr;
  grid-template-rows: 313px 1fr;
  width: 551px;
  height: 342px;
  margin: 14px 0 0 4px;
  border: 2px solid #696969;
  border-right: 1px solid #fff;
  border-bottom: 1px solid #fff;
`;

const Pane = styled.div`
  padding: 20px 0 0 5px;
  border-right: 1px solid #fff;
  border-bottom: 1px solid #fff;
  overflow: hidden;
`;

const PropRow = styled.div`
  display: grid;
  grid-template-columns: 367px 117px 22px;
  align-items: start;
  height: 37px;
  line-height: 18px;

  ${ComboBox} {
    margin-left: 2px;
  }
`;

const PropField = styled.div`
  display: flex;
  white-space: nowrap;

  label {
    width: 185px;
    overflow: hidden;
  }

  ${(p) =>
    p.$active &&
    css`
      width: 335px;
      height: 32px;
      margin-left: 2px;
      padding: 2px 0 0 2px;
      border: 2px solid #a0a0a0;
      box-shadow: inset -1px -1px 0 #fff, 0 -1px 0 #fff;

      label {
        width: 179px;
      }
    `}
`;

const VBar = styled.div`
  width: 11px;
  height: 118px;
  margin: 26px 0 0 8px;
  background: #868686;
`;

const HBar = styled.div`
  width: 380px;
  height: 11px;
  margin: 7px 0 0 26px;
  background: #868686;
`;

const Hint = styled.div`
  width: 551px;
  height: 101px;
  margin: 138px 0 0 4px;
  padding: 4px 5px;
  border: 1px solid #a0a0a0;
`;

const DialogFooter = styled.div`
  display: flex;
  gap: 92px;
  margin-top: 34px;
  padding: 20px 0 0 57px;
  border-top: 1px solid #a0a0a0;
`;

const Watermark = styled.div`
  position: absolute;
  right: 14px;
  bottom: 6px;
  font-family: "Noto Sans CJK SC", sans-serif;
  font-size: 20px;
  line-height: 28px;
  color: #909090;
  text-shadow: 1px 1px 0 #fff;
`;

export default App;
